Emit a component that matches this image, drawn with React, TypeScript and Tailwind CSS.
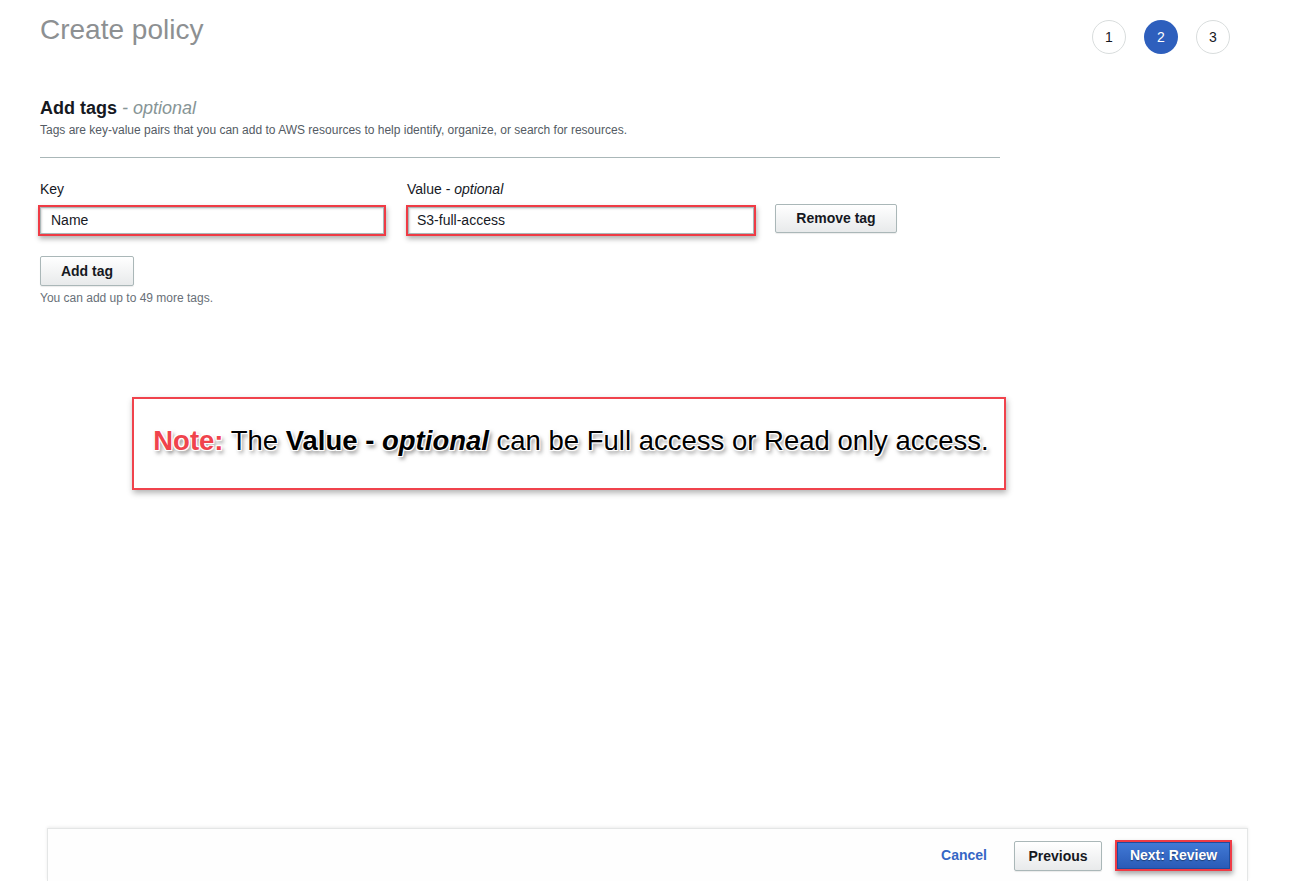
import React from "react";

const btn =
  "flex items-center justify-center rounded-[2px] border border-[#aab7b8] bg-gradient-to-b from-[#ffffff] to-[#e8eaeb] text-[14px] font-bold text-[#16191f] shadow-[0_1px_1px_rgba(0,0,0,0.08)]";

function Step({ n, active }: { n: number; active?: boolean }) {
  return active ? (
    <div className="flex h-[34px] w-[34px] items-center justify-center rounded-full bg-[#2e5fbd] text-[14px] text-white">
      {n}
    </div>
  ) : (
    <div className="flex h-[34px] w-[34px] items-center justify-center rounded-full border border-[#d9dddd] bg-white text-[14px] text-[#16191f]">
      {n}
    </div>
  );
}

function Field({ value, pad }: { value: string; pad: string }) {
  return (
    <div className="h-[31px] border-2 border-[#ef3b45] shadow-[1px_3px_5px_rgba(0,0,0,0.3)]">
      <div
        className={`flex h-full items-center border border-[#aab7b8] bg-white text-[14px] text-[#16191f] shadow-[inset_1px_1px_2px_rgba(0,0,0,0.15)] ${pad}`}
      >
        {value}
      </div>
    </div>
  );
}

export default function App() {
  const glow =
    "[text-shadow:-1px_-1px_0_#fff,1px_-1px_0_#fff,-1px_1px_0_#fff,1px_1px_0_#fff,0_0_3px_#fff,2px_3px_4px_rgba(0,0,0,0.55)]";
  return (
    <div className="flex min-h-screen flex-col bg-white font-['Liberation_Sans',Arial,sans-serif]">
      <div className="flex-1">
        <div className="flex items-start justify-between pl-[40px] pr-[64px]">
          <h1 className="mt-[13px] text-[28px] leading-[34px] text-[#8d9092]">Create policy</h1>
          <div className="mt-[20px] flex gap-[18px]">
            <Step n={1} />
            <Step n={2} active />
            <Step n={3} />
          </div>
        </div>

        <div className="pl-[40px]">
          <h2 className="mt-[43px] text-[18px] font-bold leading-[22px] text-[#16191f]">
            Add tags <span className="font-normal italic text-[#879596]">- optional</span>
          </h2>
          <p className="mt-[3px] text-[12px] leading-[16px] text-[#545b64]">
            Tags are key-value pairs that you can add to AWS resources to help identify, organize, or search for resources.
          </p>
          <div className="mt-[19px] h-px w-[960px] bg-[#aab7b8]" />

          <div className="mt-[21px] flex items-start">
            <div className="-ml-[2px] w-[348px]">
              <div className="pl-[2px] text-[14px] leading-[20px] text-[#16191f]">Key</div>
              <div className="mt-[6px]">
                <Field value="Name" pad="pl-[10px]" />
              </div>
            </div>
            <div className="ml-[20px] w-[350px]">
              <div className="pl-[1px] text-[14px] leading-[20px] text-[#16191f]">
                Value - <span className="italic">optional</span>
              </div>
              <div className="mt-[6px]">
                <Field value="S3-full-access" pad="pl-[8px]" />
              </div>
            </div>
            <button className={`${btn} ml-[19px] mt-[25px] h-[29px] w-[122px]`}>Remove tag</button>
          </div>

          <button className={`${btn} mt-[20px] h-[30px] w-[94px]`}>Add tag</button>
          <p className="mt-[4px] text-[12px] leading-[16px] text-[#687078]">You can add up to 49 more tags.</p>

          <div className="ml-[92px] mt-[91px] flex h-[93px] w-[874px] items-center justify-center border-2 border-[#f0434c] pb-[5px] pl-[4px] shadow-[1px_3px_6px_rgba(0,0,0,0.3)]">
            <p className={`text-[27.5px] leading-[34px] text-black ${glow}`}>
              <span className="font-bold text-[#f0434c]">Note:</span> The{" "}
              <span className="font-bold">
                Value - <span className="italic">optional</span>
              </span>{" "}
              can be Full access or Read only access.
            </p>
          </div>
        </div>
      </div>

      <div className="ml-[47px] mr-[46px] flex h-[53px] items-center justify-end border-x border-t border-[#e4e6e6] bg-[#fefefe] pr-[15px] shadow-[0_-1px_3px_rgba(0,0,0,0.08)]">
        <span className="text-[14px] font-bold text-[#3566c5]">Cancel</span>
        <button className={`${btn} ml-[27px] mt-[2px] h-[30px] w-[88px] text-[#545b64]`}>Previous</button>
        <div className="ml-[13px] h-[31px] w-[117px] border-2 border-[#ef3b45] shadow-[1px_3px_5px_rgba(0,0,0,0.35)]">
          <button className="flex h-full w-full items-center justify-center border border-[#1e4c9e] bg-gradient-to-b from-[#4179d6] to-[#2a5bb7] text-[14px] font-bold text-white [text-shadow:0_1px_1px_rgba(0,0,0,0.4)]">
            Next: Review
          </button>
        </div>
      </div>
    </div>
  );
}
